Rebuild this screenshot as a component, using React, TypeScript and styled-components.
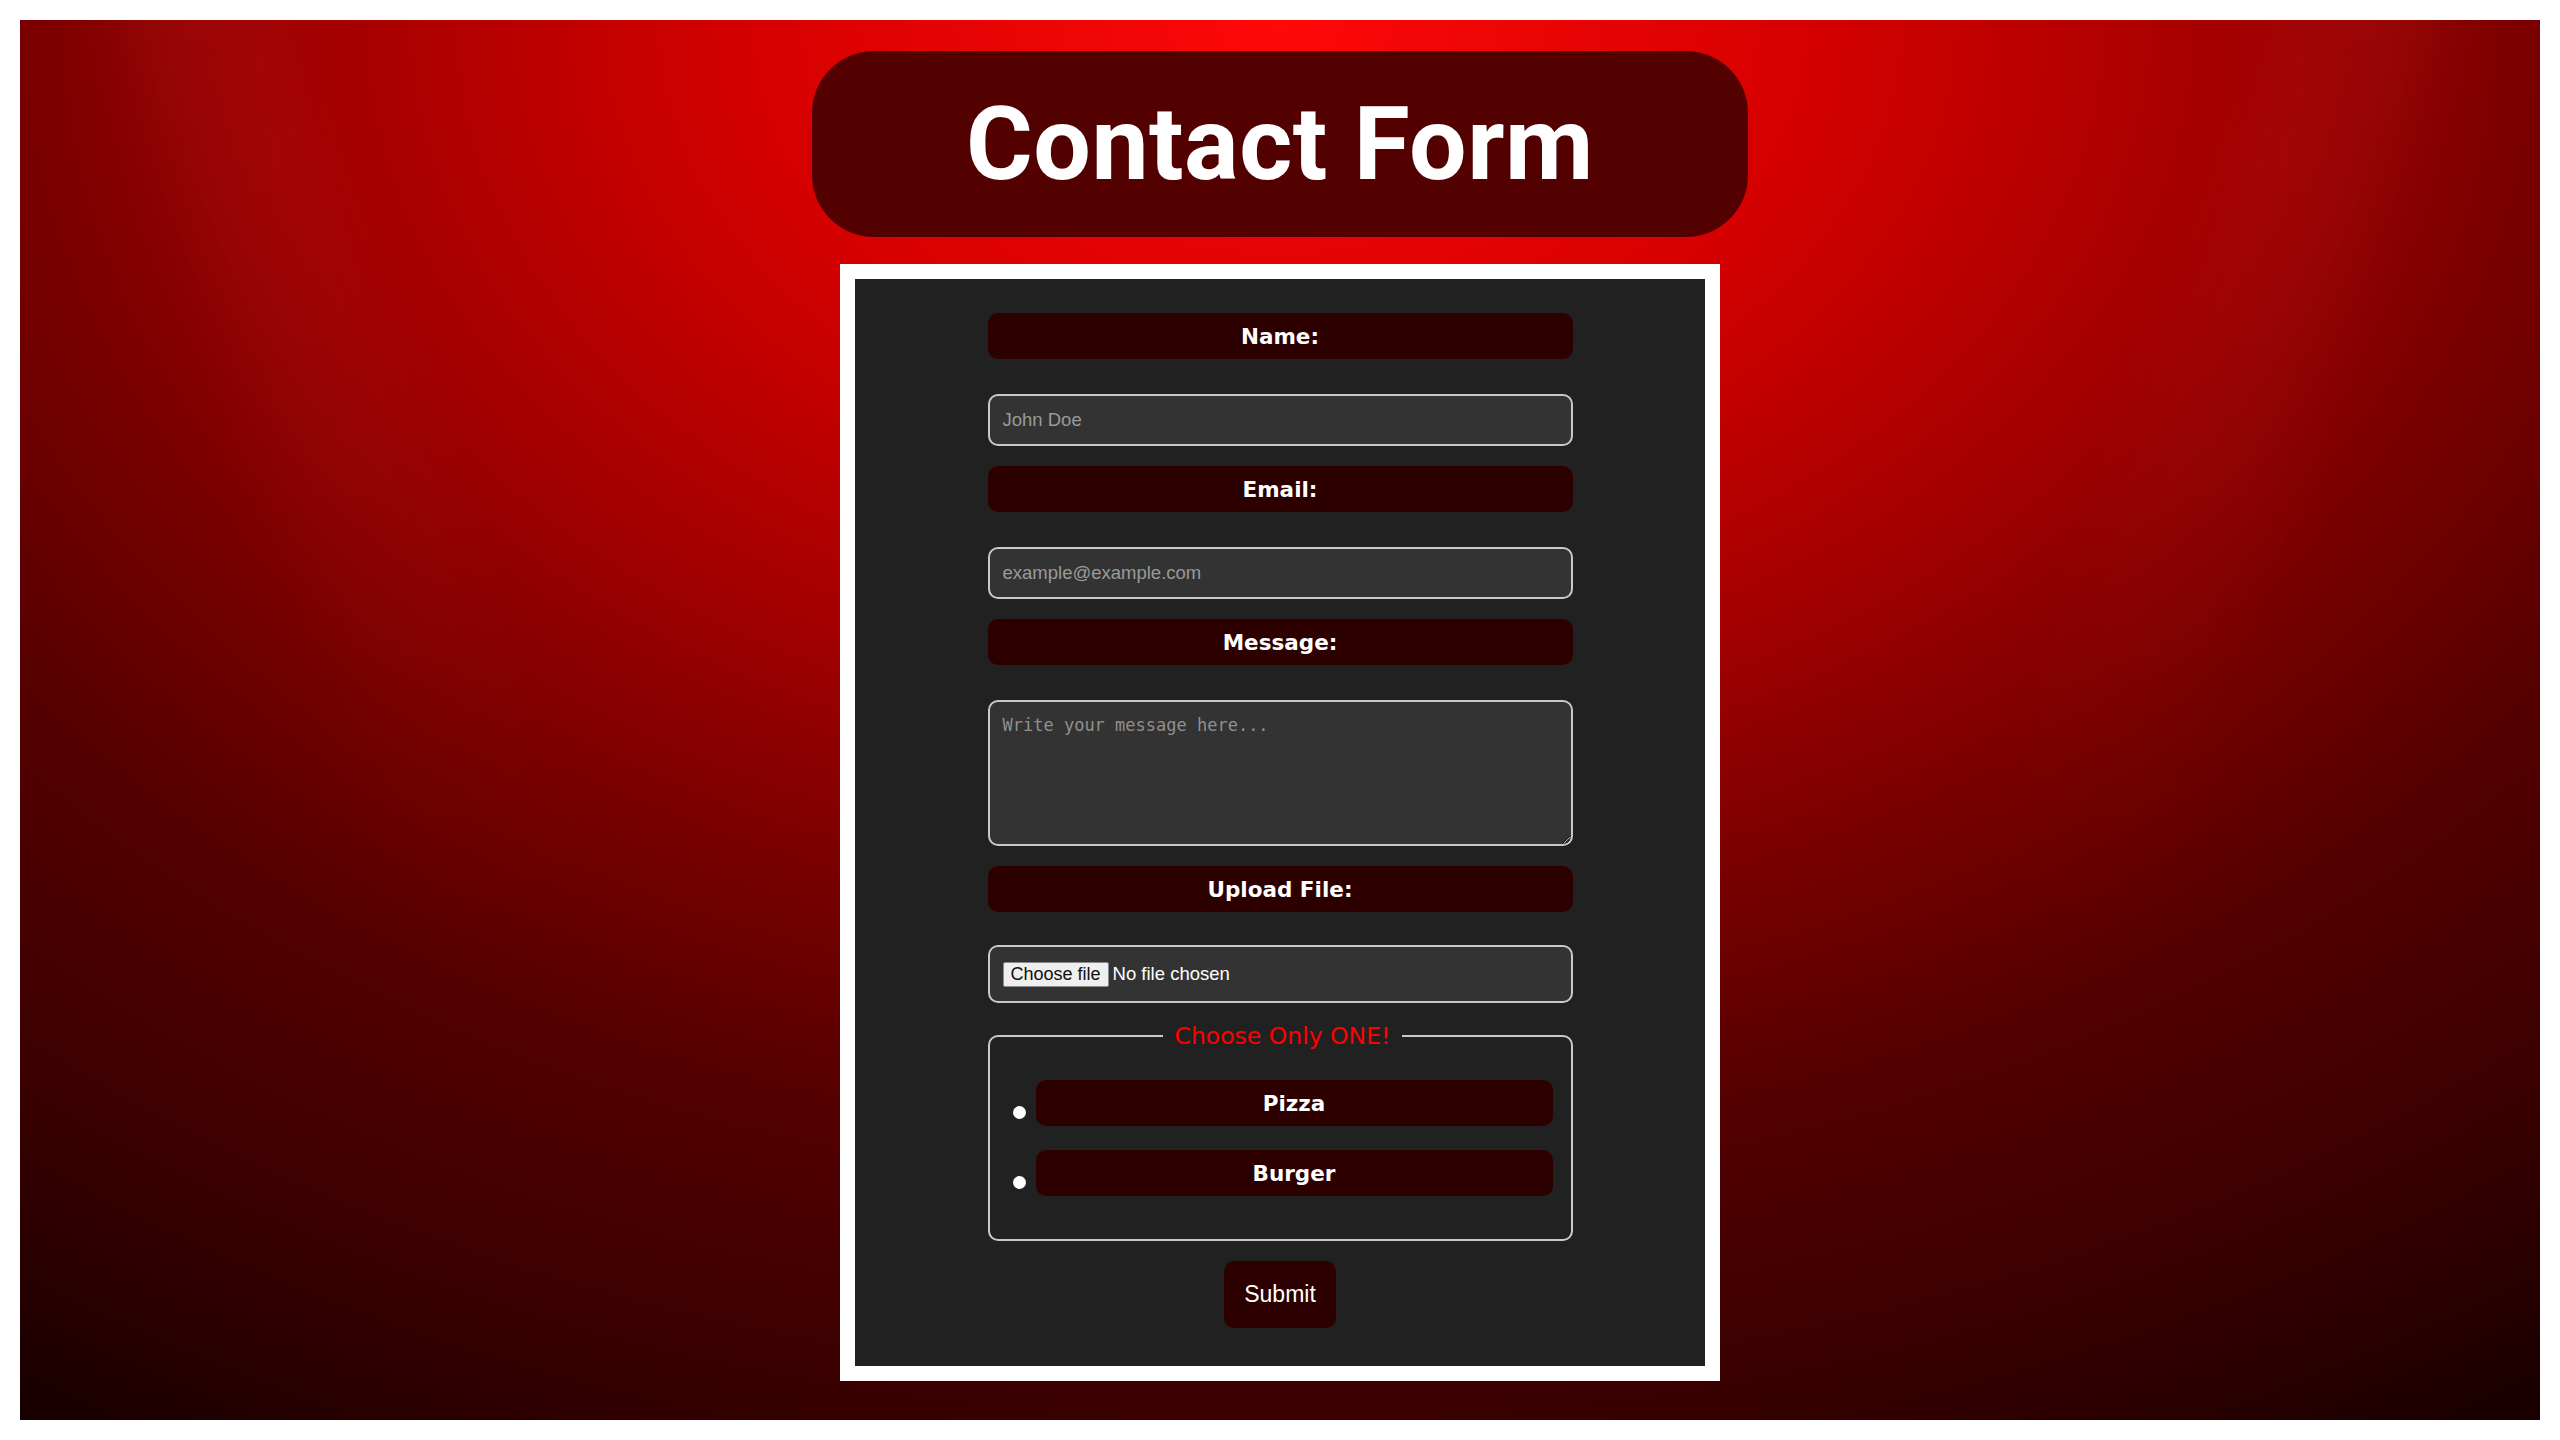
import React from "react";
import styled, { createGlobalStyle } from "styled-components";

const GlobalStyle = createGlobalStyle`
  html, body {
    background: #ffffff;
  }
  body {
    margin: 20px;
    font-family: Verdana, "DejaVu Sans", sans-serif;
  }
  * {
    box-sizing: border-box;
  }
`;

const Stage = styled.main`
  position: relative;
  overflow: hidden;
  height: 1400px;
  display: flex;
  flex-direction: column;
  align-items: center;
  background: radial-gradient(
    ellipse 77% 100% at 50% 0%,
    #ff0808 0%,
    #d40000 28%,
    #a60000 48%,
    #7c0000 64%,
    #560000 80%,
    #3a0000 100%,
    #120000 122%
  );

  &::before,
  &::after {
    content: "";
    position: absolute;
    top: -80px;
    width: 150px;
    height: 1000px;
    background: linear-gradient(to bottom, rgba(255, 60, 60, 0.1), rgba(255, 60, 60, 0));
    filter: blur(30px);
    pointer-events: none;
  }
  &::before {
    left: 250px;
    transform: rotate(-19deg);
  }
  &::after {
    right: 250px;
    transform: rotate(19deg);
  }
`;

const Title = styled.h1`
  position: relative;
  z-index: 1;
  margin: 31px 0 0;
  height: 186px;
  padding: 0 154px;
  display: flex;
  align-items: center;
  justify-content: center;
  background: #520000;
  border-radius: 62px;
  color: #ffffff;
  font-family: Roboto, "Liberation Sans", sans-serif;
  font-weight: 700;
  font-size: 102px;
  letter-spacing: 0.5px;
`;

const Frame = styled.section`
  position: relative;
  z-index: 1;
  margin-top: 27px;
  width: 880px;
  border: 15px solid #ffffff;
  background: #212121;
  padding: 34px 0 38px;
  display: flex;
  justify-content: center;
`;

const Form = styled.form`
  width: 585px;
  display: flex;
  flex-direction: column;
  gap: 20px;
`;

const Field = styled.div<{ $gap?: number }>`
  display: flex;
  flex-direction: column;
  gap: ${(p) => p.$gap ?? 35}px;
`;

const Tag = styled.label`
  height: 46px;
  display: flex;
  align-items: center;
  justify-content: center;
  background: #2d0000;
  border-radius: 10px;
  color: #ffffff;
  font-family: Verdana, "DejaVu Sans", sans-serif;
  font-weight: 700;
  font-size: 21.5px;
`;

const boxBorder = `
  border: 2px solid #c9c9c9;
  border-radius: 10px;
  background: #333333;
`;

const TextInput = styled.input`
  ${boxBorder}
  height: 52px;
  padding: 0 13px;
  color: #ffffff;
  font-family: Arial, "Liberation Sans", sans-serif;
  font-size: 18.5px;
  outline: none;

  &::placeholder {
    color: #9a9a9a;
  }
`;

const MessageBox = styled.textarea`
  ${boxBorder}
  height: 146px;
  padding: 13px 13px;
  color: #ffffff;
  font-family: "DejaVu Sans Mono", monospace;
  font-size: 17px;
  outline: none;

  &::placeholder {
    color: #8f8f8f;
  }
`;

const FileBox = styled.label`
  ${boxBorder}
  height: 58px;
  padding: 0 13px;
  display: flex;
  align-items: center;
  gap: 4px;
  color: #ffffff;
  font-family: Arial, "Liberation Sans", sans-serif;
  font-size: 18.5px;

  input {
    display: none;
  }
`;

const FileButton = styled.span`
  height: 25px;
  padding: 0 7px;
  display: flex;
  align-items: center;
  background: #efefef;
  border: 1px solid #8a8a8a;
  border-radius: 2px;
  color: #111111;
  font-size: 18px;
`;

const Choices = styled.fieldset`
  margin: 0;
  min-width: 0;
  padding: 31px 18px 43px 23px;
  border: 2px solid #c9c9c9;
  border-radius: 10px;
`;

const Legend = styled.legend`
  margin: 0 auto;
  padding: 0 12px;
  color: #ff0000;
  font-family: Verdana, "DejaVu Sans", sans-serif;
  font-size: 23.5px;
  line-height: 26px;
`;

const OptionList = styled.div`
  display: flex;
  flex-direction: column;
  gap: 24px;
`;

const Option = styled.div`
  display: flex;
  align-items: center;
  gap: 10px;
`;

const Radio = styled.input`
  appearance: none;
  flex: none;
  width: 13px;
  height: 13px;
  margin: 18px 0 0;
  border-radius: 50%;
  background: #ffffff;
`;

const OptionTag = styled(Tag)`
  flex: 1;
`;

const Submit = styled.button`
  align-self: center;
  height: 67px;
  padding: 0 20px;
  background: #2d0000;
  border: none;
  border-radius: 10px;
  color: #ffffff;
  font-family: Arial, "Liberation Sans", sans-serif;
  font-size: 23px;
  cursor: pointer;
`;

const foods = ["Pizza", "Burger"];

export default function App() {
  return (
    <>
      <GlobalStyle />
      <Stage>
        <Title>Contact Form</Title>
        <Frame>
          <Form onSubmit={(e) => e.preventDefault()}>
            <Field>
              <Tag htmlFor="name">Name:</Tag>
              <TextInput id="name" type="text" placeholder="John Doe" />
            </Field>
            <Field>
              <Tag htmlFor="email">Email:</Tag>
              <TextInput id="email" type="email" placeholder="example@example.com" />
            </Field>
            <Field>
              <Tag htmlFor="message">Message:</Tag>
              <MessageBox id="message" placeholder="Write your message here..." />
            </Field>
            <Field $gap={33}>
              <Tag htmlFor="file">Upload File:</Tag>
              <FileBox>
                <input id="file" type="file" />
                <FileButton>Choose file</FileButton>
                No file chosen
              </FileBox>
            </Field>
            <Choices>
              <Legend>Choose Only ONE!</Legend>
              <OptionList>
                {foods.map((food) => (
                  <Option key={food}>
                    <Radio type="radio" name="food" id={food} />
                    <OptionTag htmlFor={food}>{food}</OptionTag>
                  </Option>
                ))}
              </OptionList>
            </Choices>
            <Submit type="submit">Submit</Submit>
          </Form>
        </Frame>
      </Stage>
    </>
  );
}
